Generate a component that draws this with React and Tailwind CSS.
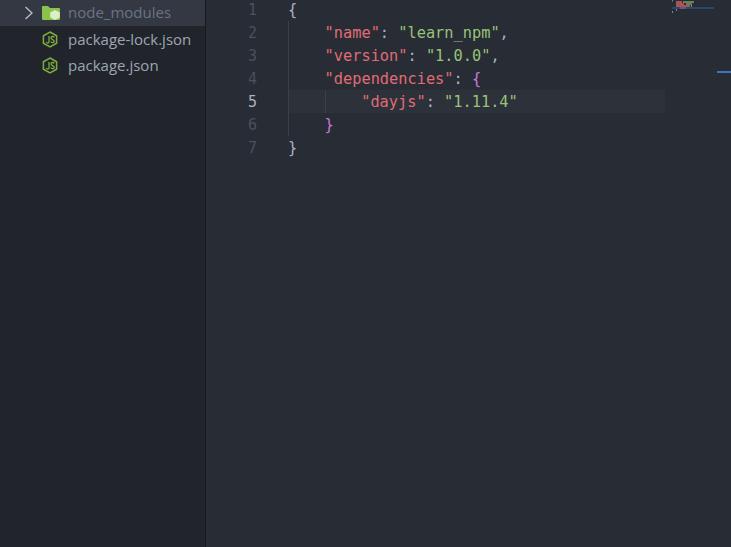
const mono = "font-['DejaVu_Sans_Mono','Liberation_Mono',monospace]";

function Chevron() {
  return (
    <svg width="12" height="14" viewBox="0 0 12 14" fill="none" className="shrink-0">
      <path d="M2.5 1 L9 7 L2.5 13" stroke="#b9c0cc" strokeWidth="1.3" />
    </svg>
  );
}

function FolderIcon() {
  return (
    <svg width="19" height="16" viewBox="0 0 19 16" className="shrink-0">
      <path d="M0 2 a1 1 0 0 1 1-1 h5 l2 2 h9 a1 1 0 0 1 1 1 v10 a1 1 0 0 1-1 1 h-16 a1 1 0 0 1-1-1 z" fill="#8bc34a" />
      <path d="M13 5 l4.8 2.5 v5 l-4.8 2.5 l-4.8-2.5 v-5 z" fill="#dcedc8" />
    </svg>
  );
}

function NodeIcon() {
  return (
    <svg width="16" height="17" viewBox="0 0 16 17" fill="none" className="shrink-0">
      <path d="M8 1 L14.6 4.75 V12.25 L8 16 L1.4 12.25 V4.75 Z" stroke="#7cad3e" strokeWidth="1.5" />
      <path d="M7 5 V10.8 C7 12.4 5 12.4 4.2 11" stroke="#7cad3e" strokeWidth="1.3" />
      <path d="M12.2 6.4 C11.4 5 9 5.2 9 7 C9 8.9 12.2 8.2 12.2 10.2 C12.2 12 9.4 12 8.8 10.6" stroke="#7cad3e" strokeWidth="1.3" />
    </svg>
  );
}

function Row({ selected, children, label, dim }) {
  return (
    <div className={`flex items-center h-[26px] ${selected ? "bg-[#333842]" : ""}`}>
      <div className="w-[42px] shrink-0 flex justify-end pr-[7px]">{selected && <Chevron />}</div>
      <div className="w-[26px] shrink-0 flex">{children}</div>
      <span className={`text-[15px] leading-[22px] ${selected ? "-mt-[2px]" : ""} ${dim ? "text-[#6b7484]" : "text-[#9da5b4]"}`}>{label}</span>
    </div>
  );
}

const K = ({ children }) => <span className="text-[#e06c75]">{children}</span>;
const S = ({ children }) => <span className="text-[#98c379]">{children}</span>;
const P = ({ children }) => <span className="text-[#abb2bf]">{children}</span>;
const B = ({ children }) => <span className="text-[#c678dd]">{children}</span>;

const Guide = () => <span className="w-[36.6px] shrink-0 h-full border-l border-[#3b4048]" />;

function Line({ n, guides = 0, active, children }) {
  return (
    <div className="flex h-[23px] items-center">
      <div className={`w-[51px] shrink-0 text-right text-[15px] mt-[1px] ${active ? "text-[#abb2bf]" : "text-[#495162]"}`}>{n}</div>
      <div className="w-[31px] shrink-0" />
      <div className={`flex-1 h-full flex items-center whitespace-pre ${active ? "bg-[#2c313a]" : ""}`}>
        {Array.from({ length: guides }).map((_, i) => <Guide key={i} />)}
        <span className="mt-[1px]">{children}</span>
      </div>
    </div>
  );
}

function Minimap() {
  return (
    <svg width="58" height="14" viewBox="0 0 58 14" className="absolute left-[7px] top-0">
      <rect x="0" y="0" width="1" height="1.5" fill="#7d8490" />
      <rect x="4" y="1" width="6" height="2" fill="#a8525c" />
      <rect x="11" y="1" width="11" height="2" fill="#79955f" opacity="0.8" />
      <rect x="4" y="3" width="8" height="2" fill="#a8525c" />
      <rect x="14" y="3" width="6" height="2" fill="#79955f" opacity="0.8" />
      <rect x="4" y="5" width="14" height="2" fill="#a8525c" />
      <rect x="19" y="5" width="1" height="2" fill="#79955f" />
      <rect x="0" y="7" width="42" height="2" fill="#264f78" opacity="0.85" />
      <rect x="8" y="7" width="6" height="2" fill="#7d5a7d" opacity="0.8" />
      <rect x="4" y="9" width="1" height="2" fill="#7d8490" />
      <rect x="0" y="11" width="1" height="2" fill="#7d8490" />
    </svg>
  );
}

export default function App() {
  return (
    <div className="w-[731px] h-[547px] flex overflow-hidden bg-[#282c34] font-['Open_Sans','Noto_Sans',sans-serif]">
      <aside className="w-[206px] shrink-0 bg-[#21252b] border-r border-[#181a1f]">
        <Row selected dim label="node_modules"><FolderIcon /></Row>
        <Row label="package-lock.json"><NodeIcon /></Row>
        <Row label="package.json"><NodeIcon /></Row>
      </aside>
      <main className="flex-1 flex min-w-0">
        <div className={`w-[459px] shrink-0 -mt-[2px] text-[15.3px] ${mono}`}>
          <Line n={1}><P>{"{"}</P></Line>
          <Line n={2} guides={1}><K>"name"</K><P>: </P><S>"learn_npm"</S><P>,</P></Line>
          <Line n={3} guides={1}><K>"version"</K><P>: </P><S>"1.0.0"</S><P>,</P></Line>
          <Line n={4} guides={1}><K>"dependencies"</K><P>: </P><B>{"{"}</B></Line>
          <Line n={5} guides={2} active><K>"dayjs"</K><P>: </P><S>"1.11.4"</S></Line>
          <Line n={6} guides={1}><B>{"}"}</B></Line>
          <Line n={7}><P>{"}"}</P></Line>
        </div>
        <div className="relative flex-1">
          <Minimap />
          <div className="absolute right-0 top-[71px] w-[14px] h-[2px] bg-[#4171c4]" />
        </div>
      </main>
    </div>
  );
}
